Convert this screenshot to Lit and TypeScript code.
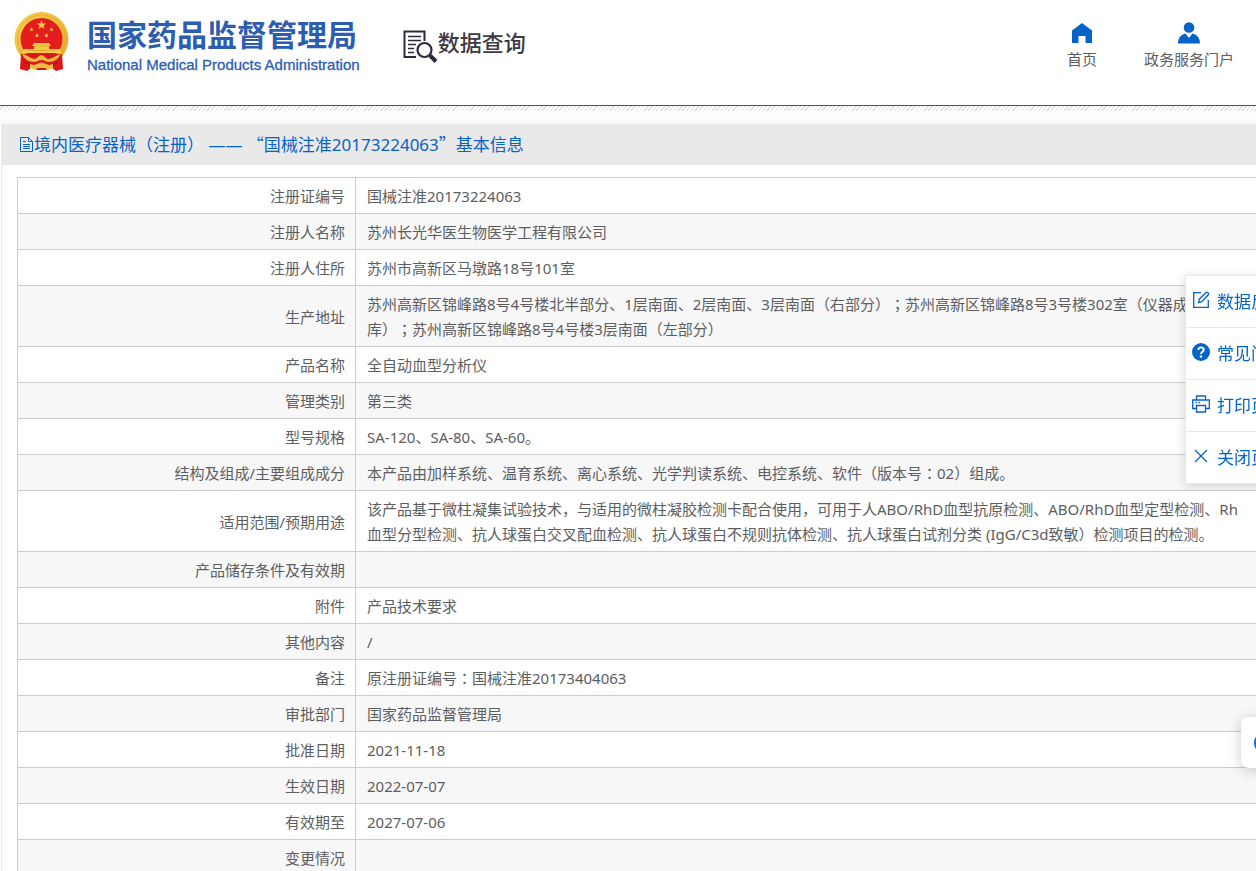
import { LitElement, html, css, svg } from "lit";
import { customElement } from "lit/decorators.js";

const ROWS: [string, string][] = [
  ["注册证编号", "国械注准20173224063"],
  ["注册人名称", "苏州长光华医生物医学工程有限公司"],
  ["注册人住所", "苏州市高新区马墩路18号101室"],
  ["生产地址", "苏州高新区锦峰路8号4号楼北半部分、1层南面、2层南面、3层南面（右部分）；苏州高新区锦峰路8号3号楼302室（仪器成品及配件库）；苏州高新区锦峰路8号4号楼3层南面（左部分）"],
  ["产品名称", "全自动血型分析仪"],
  ["管理类别", "第三类"],
  ["型号规格", "SA-120、SA-80、SA-60。"],
  ["结构及组成/主要组成成分", "本产品由加样系统、温育系统、离心系统、光学判读系统、电控系统、软件（版本号：02）组成。"],
  ["适用范围/预期用途", "该产品基于微柱凝集试验技术，与适用的微柱凝胶检测卡配合使用，可用于人ABO/RhD血型抗原检测、ABO/RhD血型定型检测、Rh血型分型检测、抗人球蛋白交叉配血检测、抗人球蛋白不规则抗体检测、抗人球蛋白试剂分类 (IgG/C3d致敏）检测项目的检测。"],
  ["产品储存条件及有效期", ""],
  ["附件", "产品技术要求"],
  ["其他内容", "/"],
  ["备注", "原注册证编号：国械注准20173404063"],
  ["审批部门", "国家药品监督管理局"],
  ["批准日期", "2021-11-18"],
  ["生效日期", "2022-07-07"],
  ["有效期至", "2027-07-06"],
  ["变更情况", ""],
];

/* Colons and semicolons are set in a face that centres them in their square. */
const centred = (text: string) =>
  text.split(/([；：])/).map((part) => (/^[；：]$/.test(part) ? html`<span class="mid">${part}</span>` : part));

const star = (cx: number, cy: number, r: number) => {
  const pts: string[] = [];
  for (let i = 0; i < 10; i++) {
    const a = -Math.PI / 2 + (i * Math.PI) / 5;
    const d = i % 2 ? r * 0.4 : r;
    pts.push(`${(cx + d * Math.cos(a)).toFixed(2)},${(cy + d * Math.sin(a)).toFixed(2)}`);
  }
  return svg`<polygon points=${pts.join(" ")} fill="#f6cf4a"/>`;
};

const emblem = html`<svg class="emblem" viewBox="0 0 56 60" aria-hidden="true">
  <defs>
    <linearGradient id="gold" x1="0" y1="0" x2="1" y2="1">
      <stop offset="0" stop-color="#f9cf4c"/><stop offset=".5" stop-color="#f0bd3c"/><stop offset="1" stop-color="#e3a52c"/>
    </linearGradient>
  </defs>
  <circle cx="27.500" cy="27" r="27" fill="url(#gold)"/>
  <circle cx="27.500" cy="27" r="24" fill="none" stroke="#e0a732" stroke-width=".8"/>
  <circle cx="27.500" cy="27" r="21" fill="#e21d1c"/>
  ${star(27.5, 13, 5)}${star(17.5, 17.5, 2.4)}${star(37.5, 17.5, 2.4)}${star(23, 23.5, 2.4)}${star(32.5, 23.5, 2.4)}
  <path d="M20 31h15l2 3h-2v3h11l2 4H8l2-4h10v-3h-2z" fill="#f5ca45"/>
  <path d="M20 34h15M13 38.500h29" stroke="#d79b27" stroke-width=".6"/>
  <path d="M7 42h41l1 15-7 2-5-4-5 3h-9l-5-3-5 4-7-2z" fill="#d8161b"/>
  <path d="M8 42c5 1 8 4 12 5 3 0 5-4 7.500-4s4 4 7.500 4c4-1 8-4 12-5-3 5-7 8-12 8-3 0-5-2-7.500-2S23 50 20 50C15 50 10 47 8 42z" fill="#efbd3d"/>
  <path d="M23 52c3-2 6-2 9 0l3 1 4-1v4l-5 2-3-2h-7l-3 2-5-2v-4l4 1z" fill="#efbd3d"/>
  <path d="M11 50l5 3M44 50l-5 3" stroke="#a80d12"/>
</svg>`;

const searchDoc = html`<svg class="search-doc" viewBox="0 0 35 34" fill="none" stroke="#2d2a3b" aria-hidden="true">
  <path d="M13 27H1.500V1.500h20V11" stroke-width="2"/>
  <path d="M5 6.500h13M5 10.500h13M5 14.500h8M5 18.500h6M5 22.500h6" stroke-width="1.400"/>
  <circle cx="21.500" cy="20" r="7" stroke-width="2.200"/>
  <path d="m27 25.500 6 6" stroke-width="4"/>
</svg>`;

const icons = {
  home: html`<svg viewBox="0 0 20 20" width="20" height="20"><path d="M10 0 0 7.500V20h6.500v-7h7v7H20V7.500z" fill="#0663c7"/></svg>`,
  user: html`<svg viewBox="0 0 22 22" width="22" height="22"><circle cx="11" cy="5.500" r="5.300" fill="#0663c7"/><path d="M0 21.500C0 16 3 12.500 7.500 11.500l3.500 4.500 3.500-4.500c4.500 1 7.500 4.500 7.500 10z" fill="#0663c7"/></svg>`,
  doc: html`<svg viewBox="0 0 16 16" width="16" height="16" fill="none" stroke="#0663c7"><path d="M2.500.5h8l4 4v10h-12zM10.500.5v4h4M5 4.500h3M5 7.500h7M5 9.500h7M5 11.500h7"/></svg>`,
  edit: html`<svg viewBox="0 0 18 18" width="18" height="18" fill="none" stroke="#0663c7" stroke-width="1.300"><path d="M9 1.700H1.700v14.600h14.600V9"/><path d="m6.500 11.500.8-3.300L14 1.500c1-1 3.300 1 2.300 2.300L9.700 10.600z"/></svg>`,
  help: html`<svg viewBox="0 0 18 18" width="18" height="18"><circle cx="9" cy="9" r="9" fill="#0663c7"/><path d="M6.300 7c0-3.500 5.400-3.400 5.400-.3C11.700 8.700 9 8.700 9 11" fill="none" stroke="#fff" stroke-width="1.900"/><circle cx="9" cy="13.500" r="1.200" fill="#fff"/></svg>`,
  print: html`<svg viewBox="0 0 18 18" width="18" height="18" fill="none" stroke="#0663c7" stroke-width="1.300"><path d="M4.500 5V1h9v4M4.500 13.500H.7V5h16.600v8.500h-3.800M4.500 10.500h9V17h-9zM3.500 7.500H5M6.500 7.500H8"/></svg>`,
  close: html`<svg viewBox="0 0 18 18" width="18" height="18" fill="none" stroke="#0663c7" stroke-width="1.300"><path d="m3 3 12 12M15 3 3 15"/></svg>`,
};

@customElement("app-root")
export class AppRoot extends LitElement {
  static styles = css`
    :host {
      display: block;
      min-height: 100vh;
      overflow: hidden;
      background: #fff;
      color: #5c5e62;
      font: 15px/24px "Noto Sans", "Noto Sans CJK SC", sans-serif;
      text-spacing-trim: space-all;
    }
    * { box-sizing: border-box; }
    a { color: inherit; text-decoration: none; }
    svg { display: block; flex: none; }
    .top {
      display: flex;
      align-items: flex-start;
      height: 105px;
      padding: 12px 22px 0 14px;
    }
    .brand { display: flex; gap: 17px; color: #2c5db0; }
    .emblem { width: 56px; height: 60px; }
    .brand-cn {
      font: 700 30px/36px "Noto Sans CJK SC", sans-serif;
      margin: 3px 0 4px;
      white-space: nowrap;
    }
    .brand-en {
      font: 15px/20px "Liberation Sans", sans-serif;
      -webkit-text-stroke: 0.3px #2c5db0;
      white-space: nowrap;
    }
    .query {
      display: flex;
      margin: 18px 0 0 43px;
      color: #3c3b42;
    }
    .search-doc { width: 35px; height: 34px; }
    .query-title { font: 500 22px/22px "Noto Sans CJK SC", sans-serif; margin: 0; white-space: nowrap; }
    .links { display: flex; gap: 47px; margin-left: auto; }
    .links a {
      display: flex;
      flex-direction: column;
      align-items: center;
      padding-top: 10px;
      white-space: nowrap;
    }
    .links .glyph { display: flex; align-items: center; height: 22px; margin-bottom: 3px; }
    .rule { border-top: 1px solid #0663c7; height: 19px; background: linear-gradient(#fff 60%, #f7f7f7); }
    .hatch {
      height: 5px;
      background: repeating-linear-gradient(135deg, #fff 0 2px, #ddd 2px 3px);
    }
    .panel {
      min-width: 1274px;
      margin-left: 1px;
      border-left: 1px solid #eaeaea;
    }
    .title {
      display: flex;
      align-items: center;
      height: 41px;
      margin: 0;
      padding: 0 16px;
      background: #e9e9e9;
      color: #0663c7;
      font-size: 17px;
      font-weight: 400;
    }
    .quote { font-family: "Noto Sans CJK SC", sans-serif; }
    .mid { font-family: "Noto Sans CJK TC", sans-serif; line-height: 0; }
    .body { padding: 12px 15px 0; }
    table { width: 100%; border-collapse: collapse; table-layout: fixed; }
    th, td { border: 1px solid #ccc; padding: 6px 11px 4px; height: 36px; text-align: left; font-weight: 400; line-height: 25px; }
    th { width: 338px; padding-right: 10px; text-align: right; }
    tr:nth-child(even) { background: #f7f7f7; }
    .tools {
      position: fixed;
      top: 275px;
      right: -44px;
      width: 115px;
      border: 1px solid #e8e8ee;
      background: #fff;
      box-shadow: 0 2px 10px rgba(0, 0, 0, 0.15);
      color: #0663c7;
      font-size: 17px;
    }
    .tools button {
      display: flex;
      align-items: center;
      gap: 7px;
      width: 100%;
      height: 52px;
      padding: 0 6px;
      border: 0;
      border-bottom: 1px solid #e8e8ee;
      background: none;
      color: inherit;
      font: inherit;
      white-space: nowrap;
    }
    .tools svg { margin-bottom: 4px; }
    .tools button:last-child { height: 51px; border-bottom: 0; }
    .chat {
      position: fixed;
      top: 717px;
      right: -37px;
      width: 52px;
      height: 51px;
      padding: 0 0 0 12px;
      border: 0;
      border-radius: 8px;
      background: #fff;
      box-shadow: 0 2px 14px rgba(0, 0, 0, 0.2);
    }
  `;

  render() {
    return html`
      <header class="top">
        <a class="brand" href="#">
          ${emblem}
          <div>
            <div class="brand-cn">国家药品监督管理局</div>
            <div class="brand-en">National Medical Products Administration</div>
          </div>
        </a>
        <div class="query">${searchDoc}<h1 class="query-title">数据查询</h1></div>
        <nav class="links">
          <a href="#"><span class="glyph">${icons.home}</span>首页</a>
          <a href="#"><span class="glyph">${icons.user}</span>政务服务门户</a>
        </nav>
      </header>
      <div class="rule"><div class="hatch"></div></div>
      <main class="panel">
        <h2 class="title">${icons.doc}<span>境内医疗器械（注册） —— <span class="quote">“</span>国械注准20173224063<span class="quote">”</span>基本信息</span></h2>
        <div class="body">
          <table>
            <tbody>
              ${ROWS.map(([k, v]) => html`<tr><th scope="row">${k}</th><td>${centred(v)}</td></tr>`)}
            </tbody>
          </table>
        </div>
      </main>
      <aside class="tools">
        <button>${icons.edit}数据反馈</button>
        <button>${icons.help}常见问题</button>
        <button>${icons.print}打印页面</button>
        <button>${icons.close}关闭页面</button>
      </aside>
      <button class="chat" aria-label="在线客服">
        <svg viewBox="0 0 24 24" width="24" height="24" fill="none" stroke="#1a6be0" stroke-width="2"><circle cx="12" cy="12" r="10"/></svg>
      </button>
    `;
  }
}
